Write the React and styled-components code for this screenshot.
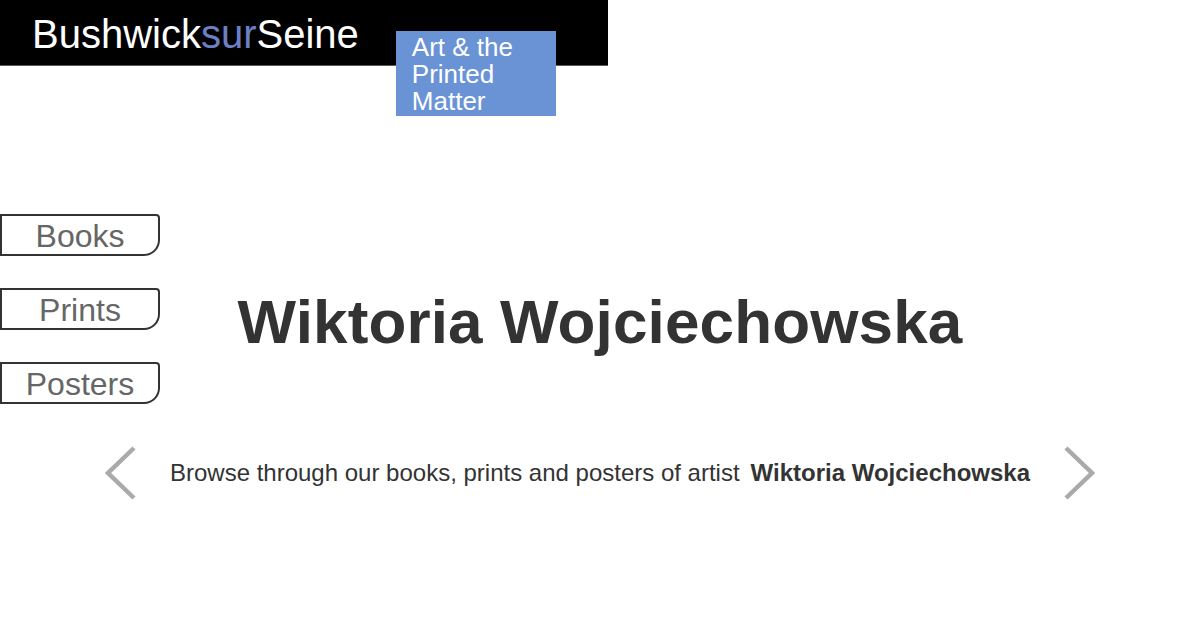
import React from 'react';
import styled, { createGlobalStyle } from 'styled-components';

const GlobalStyle = createGlobalStyle`
  html, body {
    margin: 0;
    padding: 0;
    background: #fff;
  }
  body {
    font-family: "Liberation Sans", Arial, sans-serif;
  }
`;

const Page = styled.div`
  width: 1200px;
  height: 630px;
  overflow: hidden;
`;

const Header = styled.header`
  display: flex;
  align-items: flex-start;
  width: 576px;
  height: 65px;
  padding-left: 32px;
  background: #000;
  border-bottom: 1px solid #5a5a5a;
`;

const Logo = styled.div`
  padding-top: 12px;
  font-size: 40px;
  line-height: normal;
  color: #fff;
  white-space: nowrap;
`;

const LogoAccent = styled.span`
  color: #6d80c6;
`;

const Tagline = styled.div`
  margin: 31px 0 0 37px;
  width: 160px;
  height: 85px;
  box-sizing: border-box;
  padding: 3px 16px 0;
  background: #6a93d6;
  color: #fff;
  font-size: 26px;
  line-height: 27px;
`;

const Main = styled.main`
  display: grid;
  grid-template-columns: 160px 1fr 160px;
  padding-top: 148px;
`;

const Nav = styled.nav`
  display: flex;
  flex-direction: column;
  gap: 32px;
`;

const NavButton = styled.a`
  display: block;
  height: 42px;
  box-sizing: border-box;
  padding-top: 1px;
  border: 2px solid #333;
  border-radius: 0 4px 16px 0;
  color: #666;
  font-size: 32px;
  line-height: 38px;
  text-align: center;
  text-decoration: none;
`;

const Title = styled.h1`
  margin: 72px 0 0;
  color: #333;
  font-size: 62px;
  font-weight: 700;
  line-height: 72px;
  letter-spacing: 0.14px;
  text-align: center;
  white-space: nowrap;
`;

const Browse = styled.div`
  display: flex;
  align-items: center;
  justify-content: center;
  gap: 34px;
  margin-top: 42px;
`;

const Arrow = styled.button`
  display: flex;
  padding: 0;
  border: 0;
  background: none;
  cursor: pointer;
`;

const BrowseText = styled.p`
  display: flex;
  gap: 11px;
  margin: 0;
  color: #333;
  font-size: 24px;
  line-height: 28px;
  white-space: nowrap;
`;

const Artist = styled.strong`
  font-weight: 700;
`;

const Chevron = ({ dir }) => (
  <svg width="32" height="54" viewBox="0 0 32 54">
    <path
      d={dir === 'left' ? 'M30 2 L4 27 L30 52' : 'M2 2 L28 27 L2 52'}
      fill="none"
      stroke="#aaa"
      strokeWidth="4.5"
    />
  </svg>
);

const navItems = ['Books', 'Prints', 'Posters'];

export default function App() {
  const artist = 'Wiktoria Wojciechowska';

  return (
    <Page>
      <GlobalStyle />
      <Header>
        <Logo>
          Bushwick<LogoAccent>sur</LogoAccent>Seine
        </Logo>
        <Tagline>Art &amp; the Printed Matter</Tagline>
      </Header>

      <Main>
        <Nav>
          {navItems.map((item) => (
            <NavButton key={item} href="#">{item}</NavButton>
          ))}
        </Nav>
        <Title>{artist}</Title>
        <div />
      </Main>

      <Browse>
        <Arrow aria-label="Previous"><Chevron dir="left" /></Arrow>
        <BrowseText>
          <span>Browse through our books, prints and posters of artist</span>
          <Artist>{artist}</Artist>
        </BrowseText>
        <Arrow aria-label="Next"><Chevron dir="right" /></Arrow>
      </Browse>
    </Page>
  );
}
